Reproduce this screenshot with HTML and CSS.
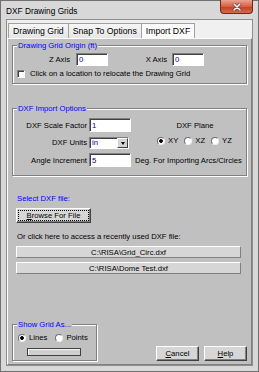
FILE: index.html
```html
<html>
    <head>
        <title>DXF Drawing Grids</title>
        <link rel="stylesheet" href="styles.css">
    </head>
    <body>
        <div class="window">
            <div class="titlebar">
                <span class="title">DXF Drawing Grids</span>
                <span class="close">
                    <svg width="10" height="8" viewBox="0 0 10 8">
                        <path d="M2 1 L8 7 M8 1 L2 7" stroke="#5a2a20" stroke-width="2.6" stroke-linecap="round"/>
                        <path d="M2 1 L8 7 M8 1 L2 7" stroke="#fff" stroke-width="1.6" stroke-linecap="round"/>
                    </svg>
                </span>
            </div>

            <div class="client">
                <div class="tabs">
                    <span class="tab">Drawing Grid</span>
                    <span class="tab">Snap To Options</span>
                    <span class="tab active">Import DXF</span>
                </div>

                <div class="panel">
                    <div class="group">
                        <div class="group-title">Drawing Grid Origin (ft)</div>
                        <div class="axis-row">
                            <span class="axis-label z-label">Z Axis</span>
                            <span class="field axis-field">0</span>
                            <span class="axis-label x-label">X Axis</span>
                            <span class="field axis-field">0</span>
                        </div>
                        <div class="check-row">
                            <span class="checkbox"></span>
                            <span>Click on a location to relocate the Drawing Grid</span>
                        </div>
                    </div>

                    <div class="group options">
                        <div class="group-title">DXF Import Options</div>
                        <div class="options-grid">
                            <span class="opt-label">DXF Scale Factor</span>
                            <span class="field opt-field">1</span>
                            <span class="plane-label">DXF Plane</span>

                            <span class="opt-label">DXF Units</span>
                            <span class="select">
                                <span class="select-value">in</span>
                                <span class="select-btn"><span class="arrow"></span></span>
                            </span>
                            <span class="plane-radios">
                                <span class="radio"><span class="radio-dot on"></span>XY</span>
                                <span class="radio"><span class="radio-dot"></span>XZ</span>
                                <span class="radio"><span class="radio-dot"></span>YZ</span>
                            </span>

                            <span class="opt-label">Angle Increment</span>
                            <span class="field opt-field">5</span>
                            <span class="hint">Deg. For Importing Arcs/Circles</span>
                        </div>
                    </div>

                    <div class="file-section">
                        <div class="section-title">Select DXF file:</div>
                        <div class="button browse"><u>B</u>rowse For File</div>
                        <div class="recent-note">Or click here to access a recently used DXF file:</div>
                        <div class="button recent">C:\RISA\Grid_Circ.dxf</div>
                        <div class="button recent">C:\RISA\Dome Test.dxf</div>
                    </div>

                    <div class="footer">
                        <div class="group show-grid">
                            <div class="group-title">Show Grid As...</div>
                            <div class="grid-radios">
                                <span class="radio"><span class="radio-dot on"></span>Lines</span>
                                <span class="radio"><span class="radio-dot"></span>Points</span>
                            </div>
                            <div class="line-sample"></div>
                        </div>
                        <div class="actions">
                            <div class="button dlg-btn"><u>C</u>ancel</div>
                            <div class="button dlg-btn"><u>H</u>elp</div>
                        </div>
                    </div>
                </div>
            </div>
        </div>
    </body>
</html>
```

FILE: styles.css
```css
body {
    margin: 0;
    font-family: "Liberation Sans", Arial, sans-serif;
    font-size: 7.7px;
    line-height: 9px;
    color: #000;
    background-color: #d8d8d8;
}

.window {
    box-sizing: border-box;
    width: 259px;
    height: 372px;
    border: 1px solid #707070;
    background-color: #d8d8d8;
    padding: 0 5px 5px;
    display: flex;
    flex-direction: column;
}

.titlebar {
    height: 18px;
    display: flex;
    align-items: flex-start;
}

.title {
    font-size: 8.3px;
    margin-top: 6px;
}

.close {
    box-sizing: border-box;
    width: 33px;
    height: 14px;
    margin: -1px 0 0 auto;
    border: 1px solid #6a2a1c;
    border-top: none;
    border-radius: 0 0 4px 4px;
    background: linear-gradient(#eaa491, #d75f44 50%, #c43f22 52%, #d66a4c);
    display: flex;
    align-items: center;
    justify-content: center;
}

.client {
    flex: 1;
    border: 1px solid #8e8e8e;
    background-color: #f0f0f0;
    display: flex;
    flex-direction: column;
}

.tabs {
    display: flex;
    padding: 3px 0 0 1px;
}

.tab {
    font-size: 8.7px;
    line-height: 14px;
    padding: 0 4px;
    border: 1px solid #a0a0a0;
    border-bottom: none;
    border-left: none;
    background: linear-gradient(#f6f6f6, #e6e6e6);
}

.tab:first-child {
    border-left: 1px solid #a0a0a0;
}

.tab.active {
    background: #fbfbfb;
}

.panel {
    flex: 1;
    border: 1px solid;
    border-color: #fff #808080 #808080 #fff;
    background-color: #c0c0c0;
    padding: 6px 4px 3px;
    display: flex;
    flex-direction: column;
}

/* etched group box */
.group {
    border: 1px solid #808080;
    box-shadow: inset 1px 1px 0 #fff, 1px 1px 0 #fff;
    padding-bottom: 5px;
}

.group-title {
    width: fit-content;
    margin: -5px 0 0 4px;
    padding: 0 1px;
    background-color: #c0c0c0;
    color: #0000ff;
}

.field {
    box-sizing: border-box;
    height: 13px;
    background-color: #fff;
    border: 1px solid;
    border-color: #808080 #fff #fff #808080;
    box-shadow: inset 1px 1px 0 #404040;
    color: #0000a0;
    padding-left: 2px;
    line-height: 12px;
}

.axis-row {
    display: flex;
    align-items: center;
    height: 13px;
    margin-top: 3px;
}

.axis-label {
    text-align: right;
}

.z-label {
    width: 57px;
    margin-right: 6px;
}

.x-label {
    width: 59px;
    margin-right: 5px;
}

.axis-field {
    width: 32px;
}

.check-row {
    display: flex;
    align-items: center;
    height: 9px;
    margin-top: 3px;
}

.checkbox {
    box-sizing: border-box;
    width: 8px;
    height: 8px;
    margin: 0 5px 0 4px;
    background-color: #fff;
    border: 1px solid;
    border-color: #808080 #fff #fff #808080;
    box-shadow: inset 1px 1px 0 #404040;
}

.options {
    margin-top: 24px;
    padding-bottom: 8px;
}

.options-grid {
    display: grid;
    grid-template-columns: 76px 46px 1fr;
    grid-template-rows: 14px 13px 14px;
    row-gap: 4px;
    align-items: center;
    margin-top: 5px;
}

.opt-label {
    text-align: right;
    padding-right: 2px;
}

.opt-field {
    width: 42px;
    height: 14px;
    line-height: 13px;
}

.select {
    align-self: end;
    box-sizing: border-box;
    width: 40px;
    height: 12px;
    display: flex;
    background-color: #fff;
    border: 1px solid;
    border-color: #808080 #fff #fff #808080;
    box-shadow: inset 1px 1px 0 #404040;
}

.select-value {
    flex: 1;
    padding-left: 2px;
    line-height: 10px;
    color: #0000a0;
}

.select-btn {
    box-sizing: border-box;
    width: 11px;
    background-color: #d4d4d4;
    border: 1px solid;
    border-color: #fff #404040 #404040 #fff;
    display: flex;
    align-items: center;
    justify-content: center;
}

.arrow {
    border-left: 2.5px solid transparent;
    border-right: 2.5px solid transparent;
    border-top: 3px solid #000;
}

.plane-label {
    width: 76px;
    margin-left: 22px;
    text-align: center;
}

.plane-radios {
    align-self: start;
    display: flex;
    align-items: center;
    height: 9px;
    margin-left: 22px;
}

.radio {
    display: flex;
    align-items: center;
    margin-right: 6px;
}

.radio-dot {
    box-sizing: border-box;
    width: 8px;
    height: 8px;
    margin-right: 3px;
    border-radius: 50%;
    border: 1px solid;
    border-color: #707070 #f0f0f0 #f0f0f0 #707070;
    background-color: #fff;
}

.radio-dot.on {
    background: radial-gradient(circle, #000 1.5px, #fff 2.2px);
}

.file-section {
    margin: 18px 0 0 4px;
}

.section-title {
    color: #0000ff;
    padding-left: 1px;
}

.button {
    box-sizing: border-box;
    background-color: #d6d6d6;
    border: 1px solid;
    border-color: #fff #404040 #404040 #fff;
    box-shadow: inset -1px -1px 0 #808080;
    display: flex;
    align-items: center;
    justify-content: center;
}

.browse {
    width: 75px;
    height: 15px;
    margin-top: 5px;
    outline: 1px dotted #000;
    outline-offset: -3px;
}

.recent-note {
    margin-top: 9px;
    padding-left: 1px;
}

.recent {
    width: 225px;
    height: 12px;
    margin-top: 5px;
    border-color: #fff #808080 #808080 #fff;
    box-shadow: none;
}

.recent + .recent {
    margin-top: 4px;
}

.footer {
    margin-top: auto;
    display: flex;
    justify-content: space-between;
    align-items: flex-end;
}

.show-grid {
    box-sizing: border-box;
    width: 85px;
    padding-bottom: 4px;
}

.grid-radios {
    display: flex;
    align-items: center;
    height: 9px;
    margin: 4px 0 0 5px;
}

.grid-radios .radio {
    margin-right: 8px;
}

.line-sample {
    box-sizing: border-box;
    width: 54px;
    height: 8px;
    margin: 6px 0 0 14px;
    border: 1px solid #404040;
    background-color: #d0d0d0;
    box-shadow: inset 1px 1px 0 #f4f4f4;
}

.actions {
    display: flex;
    gap: 5px;
}

.dlg-btn {
    width: 43px;
    height: 15px;
}
```
